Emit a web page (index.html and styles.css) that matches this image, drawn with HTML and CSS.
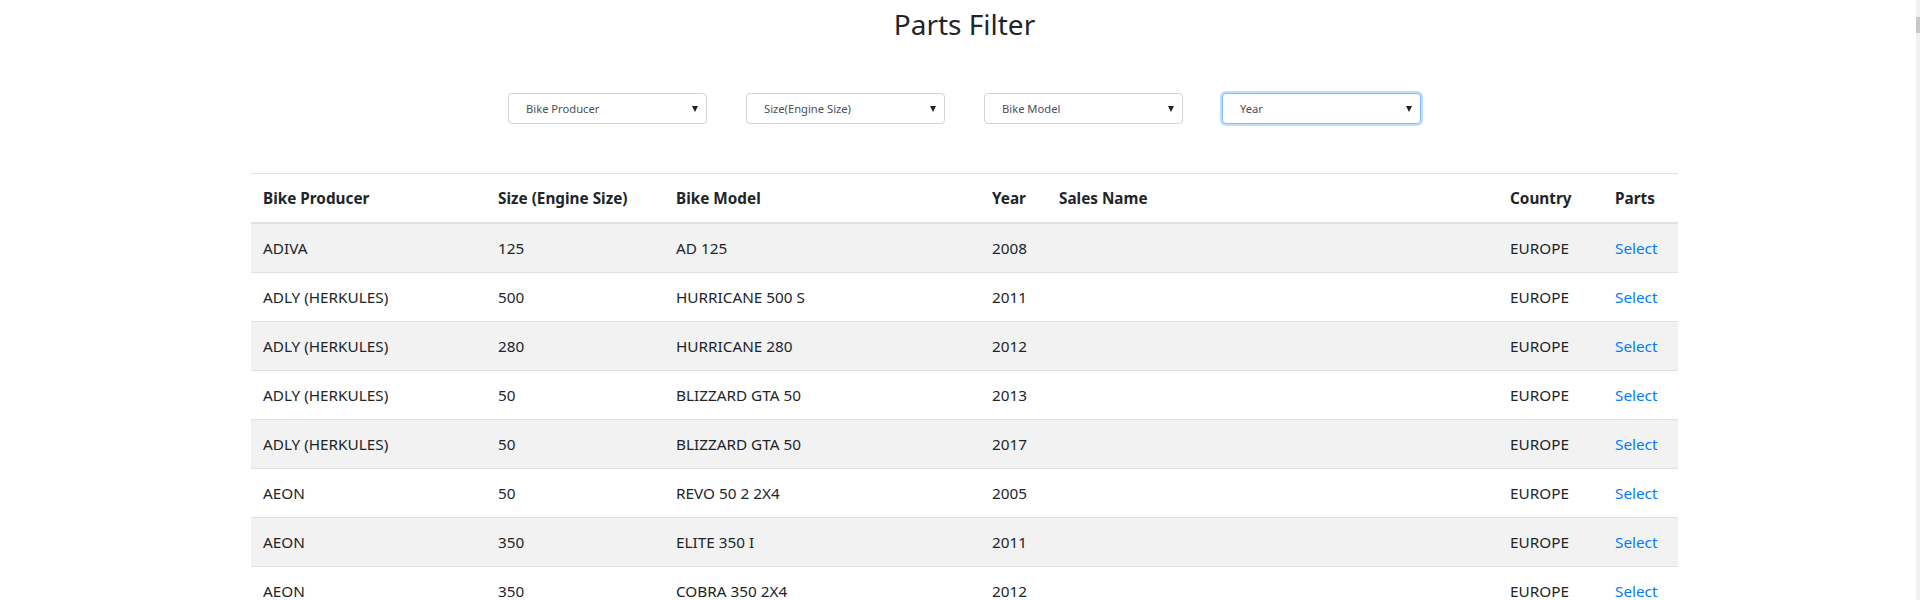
FILE: index.html
```html
<!DOCTYPE html>
<html lang="en">
<head>
<meta charset="utf-8">
<title>Parts Filter</title>
<link rel="stylesheet" href="styles.css">
</head>
<body>
<div class="page">
  <h1 class="title">Parts Filter</h1>
  <div class="filters">
    <div class="select-wrap"><div class="select">Bike Producer</div></div>
    <div class="select-wrap"><div class="select">Size(Engine Size)</div></div>
    <div class="select-wrap"><div class="select">Bike Model</div></div>
    <div class="select-wrap"><div class="select focused">Year</div></div>
  </div>
  <table class="parts">
    <colgroup>
      <col class="c1"><col class="c2"><col class="c3"><col class="c4"><col class="c5"><col class="c6"><col class="c7">
    </colgroup>
    <thead>
      <tr><th>Bike Producer</th><th>Size (Engine Size)</th><th>Bike Model</th><th>Year</th><th>Sales Name</th><th>Country</th><th>Parts</th></tr>
    </thead>
    <tbody>
      <tr><td>ADIVA</td><td>125</td><td>AD 125</td><td>2008</td><td></td><td>EUROPE</td><td><a href="#">Select</a></td></tr>
      <tr><td>ADLY (HERKULES)</td><td>500</td><td>HURRICANE 500 S</td><td>2011</td><td></td><td>EUROPE</td><td><a href="#">Select</a></td></tr>
      <tr><td>ADLY (HERKULES)</td><td>280</td><td>HURRICANE 280</td><td>2012</td><td></td><td>EUROPE</td><td><a href="#">Select</a></td></tr>
      <tr><td>ADLY (HERKULES)</td><td>50</td><td>BLIZZARD GTA 50</td><td>2013</td><td></td><td>EUROPE</td><td><a href="#">Select</a></td></tr>
      <tr><td>ADLY (HERKULES)</td><td>50</td><td>BLIZZARD GTA 50</td><td>2017</td><td></td><td>EUROPE</td><td><a href="#">Select</a></td></tr>
      <tr><td>AEON</td><td>50</td><td>REVO 50 2 2X4</td><td>2005</td><td></td><td>EUROPE</td><td><a href="#">Select</a></td></tr>
      <tr><td>AEON</td><td>350</td><td>ELITE 350 I</td><td>2011</td><td></td><td>EUROPE</td><td><a href="#">Select</a></td></tr>
      <tr><td>AEON</td><td>350</td><td>COBRA 350 2X4</td><td>2012</td><td></td><td>EUROPE</td><td><a href="#">Select</a></td></tr>
    </tbody>
  </table>
</div>
<div class="scrollbar"><div class="thumb"></div></div>
</body>
</html>
```
FILE: styles.css
```css
html, body {
  margin: 0;
  padding: 0;
  overflow: hidden;
  background: #fff;
}
body {
  font-family: "Noto Sans", "Open Sans", sans-serif;
  color: #212529;
  font-size: 15.3px;
  line-height: 24px;
}
.page {
  width: 1427px;
  margin-left: 251px;
  display: flex;
  flex-direction: column;
  align-items: center;
}
.title {
  margin: 2px 0 0;
  font-size: 28px;
  font-weight: 400;
  line-height: 44px;
  color: #212529;
}
.filters {
  display: flex;
  gap: 39px;
  margin-top: 47px;
}
.select-wrap {
  position: relative;
  width: 199px;
}
.select {
  box-sizing: border-box;
  height: 31px;
  border: 1px solid #ced4da;
  border-radius: 4px;
  padding: 0 24px 0 17px;
  font-size: 11.2px;
  line-height: 29px;
  color: #495057;
  background: #fff;
}
.select-wrap::after {
  content: "";
  position: absolute;
  right: 9px;
  top: 13px;
  border-left: 3.5px solid transparent;
  border-right: 3.5px solid transparent;
  border-top: 6px solid #222;
}
.select.focused {
  border-color: #80bdff;
  box-shadow: 0 0 0 2px rgba(0, 123, 255, 0.25);
}
.parts {
  margin-top: 49px;
  width: 1427px;
  border-collapse: collapse;
  table-layout: fixed;
}
.c1 { width: 235px; }
.c2 { width: 178px; }
.c3 { width: 316px; }
.c4 { width: 67px; }
.c5 { width: 451px; }
.c6 { width: 105px; }
.c7 { width: 75px; }
.parts th, .parts td {
  text-align: left;
  padding: 12px;
  border-top: 1px solid #dee2e6;
  white-space: nowrap;
  vertical-align: top;
}
.parts th {
  font-weight: 700;
  border-bottom: 2px solid #dee2e6;
}
.parts tbody tr:first-child td {
  border-top: 0;
}
.parts tbody tr:nth-child(odd) {
  background: #f2f2f2;
}
.parts a {
  color: #007bff;
  text-decoration: none;
}
.scrollbar {
  position: fixed;
  right: 0;
  top: 0;
  width: 4px;
  height: 100%;
  background: #f1f1f1;
}
.thumb {
  margin-top: 17px;
  height: 16px;
  background: #c8c8c8;
}
```
